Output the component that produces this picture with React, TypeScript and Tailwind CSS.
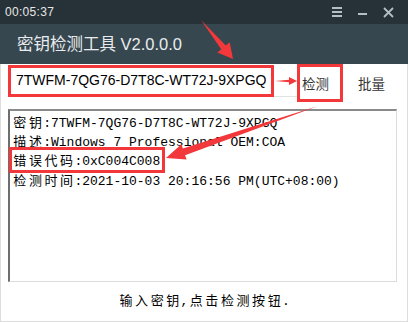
import React from "react";

type Pt = [number, number];

function arrowPoints(t: Pt, p: Pt, L: number, W: number, w: number): string {
  const dx = p[0] - t[0];
  const dy = p[1] - t[1];
  const len = Math.hypot(dx, dy);
  const ux = dx / len;
  const uy = dy / len;
  const nx = -uy;
  const ny = ux;
  const bx = p[0] - ux * L;
  const by = p[1] - uy * L;
  const pts: Pt[] = [
    [t[0], t[1]],
    [bx + nx * w, by + ny * w],
    [bx + nx * W, by + ny * W],
    [p[0], p[1]],
    [bx - nx * W, by - ny * W],
    [bx - nx * w, by - ny * w],
  ];
  return pts.map((q) => `${q[0].toFixed(1)},${q[1].toFixed(1)}`).join(" ");
}

const mono = { fontFamily: '"Liberation Mono", "Noto Sans CJK SC", monospace' };

function Cjk({ children }: { children: React.ReactNode }) {
  return (
    <span
      className="tracking-[2.6px] ml-[1.3px] mr-[-1.3px]"
      style={{ fontFamily: '"Noto Sans CJK SC", sans-serif' }}
    >
      {children}
    </span>
  );
}

function Line({ children, extra }: { children: React.ReactNode; extra?: React.ReactNode }) {
  return (
    <div className="relative h-[19.4px] flex items-center">
      <span className="whitespace-pre leading-[16px]">{children}</span>
      {extra}
    </div>
  );
}

export default function App() {
  return (
    <div className="relative w-[408px] h-[322px] flex flex-col bg-white overflow-hidden">
      {/* top bar */}
      <div className="h-[24px] bg-[#263238] flex items-center justify-between pl-[5px] pr-[14px]">
        <span
          className="text-[12px] text-[#e6e6e6] tracking-[0.3px]"
          style={{ fontFamily: '"Liberation Sans", Arial, sans-serif' }}
        >
          00:05:37
        </span>
        <div className="flex items-center gap-[16px]">
          <svg width="10" height="10" viewBox="0 0 10 10">
            <rect x="0" y="0" width="10" height="2" fill="#b4bec4" />
            <rect x="0" y="4" width="10" height="2" fill="#b4bec4" />
            <rect x="0" y="8" width="10" height="2" fill="#b4bec4" />
          </svg>
          <svg width="9" height="10" viewBox="0 0 9 10">
            <rect x="0" y="6" width="9" height="2" fill="#b4bec4" />
          </svg>
          <svg width="11" height="11" viewBox="0 0 11 11">
            <path d="M1 1 L10 10 M10 1 L1 10" stroke="#b4bec4" strokeWidth="1.8" />
          </svg>
        </div>
      </div>

      {/* title bar */}
      <div className="h-[40px] bg-[#37474f] flex items-center pl-[17px]">
        <span
          className="text-[16.5px] text-[#e8ecee]"
          style={{ fontFamily: '"Liberation Sans", "Noto Sans CJK SC", sans-serif' }}
        >
          密钥检测工具 V2.0.0.0
        </span>
      </div>

      {/* body */}
      <div className="flex-1 flex flex-col border-x border-b border-[#dcdcdc] px-[7px]">
        <div className="flex items-start h-[38px]">
          <div className="relative w-[289px] h-[32px] mt-[1px] border-b border-[#e2e2e2] flex items-center pl-[8px]">
            <span
              className="text-[14px] text-black"
              style={{ fontFamily: '"Liberation Sans", Arial, sans-serif' }}
            >
              7TWFM-7QG76-D7T8C-WT72J-9XPGQ
            </span>
            <div className="absolute left-0 top-0 w-[266px] h-[32px] border-[3px] border-[#f2383a]" />
          </div>
          <div
            className="w-[46px] h-[38px] border-[3px] border-[#f2383a] flex items-center pl-[2px] text-[13.5px] text-[#333]"
            style={{ fontFamily: '"Noto Sans CJK SC", sans-serif' }}
          >
            检测
          </div>
          <div
            className="ml-[15px] h-[38px] flex items-center text-[13.5px] text-[#333]"
            style={{ fontFamily: '"Noto Sans CJK SC", sans-serif' }}
          >
            批量
          </div>
        </div>

        {/* result box */}
        <div
          className="mt-[7px] h-[173px] w-[389px] border-t-2 border-l-2 border-r border-b border-t-[#8a8a8a] border-l-[#6e6e6e] border-r-[#dcdcdc] border-b-[#dcdcdc] pl-[2px] pt-[2px] text-[13px] text-black"
          style={mono}
        >
          <Line>
            <Cjk>密钥</Cjk>:7TWFM-7QG76-D7T8C-WT72J-9XPGQ
          </Line>
          <Line>
            <Cjk>描述</Cjk>:Windows 7 Professional OEM:COA
          </Line>
          <Line
            extra={
              <div className="absolute left-[-3px] top-[-5px] w-[156px] h-[26px] border-[3px] border-[#f2383a]" />
            }
          >
            <Cjk>错误代码</Cjk>:0xC004C008
          </Line>
          <Line>
            <Cjk>检测时间</Cjk>:2021-10-03 20:16:56 PM(UTC+08:00)
          </Line>
        </div>

        <div className="flex-1 flex items-center justify-center pb-[2px] text-[13px] text-black" style={mono}>
          <span className="whitespace-pre leading-[16px]">
            <Cjk>输入密钥</Cjk>,<Cjk>点击检测按钮</Cjk>.
          </span>
        </div>
      </div>

      {/* annotation arrows */}
      <svg className="absolute left-0 top-0 pointer-events-none" width="408" height="322">
        <polygon points={arrowPoints([201, 20], [233, 59], 15, 8, 3)} fill="#f2383a" />
        <polygon points={arrowPoints([275, 81], [297, 81], 8, 4, 1.2)} fill="#f2383a" />
        <polygon points={arrowPoints([318, 106], [166, 158], 19, 8, 3.5)} fill="#f2383a" />
      </svg>
    </div>
  );
}
